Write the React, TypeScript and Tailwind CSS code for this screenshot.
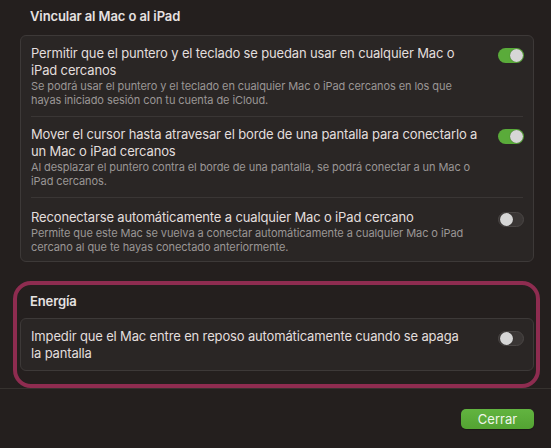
import React from 'react';

type Row = {
  title: string;
  detail?: string;
  on: boolean;
};

const linkRows: Row[] = [
  {
    title: 'Permitir que el puntero y el teclado se puedan usar en cualquier Mac o iPad cercanos',
    detail:
      'Se podrá usar el puntero y el teclado en cualquier Mac o iPad cercanos en los que hayas iniciado sesión con tu cuenta de iCloud.',
    on: true,
  },
  {
    title: 'Mover el cursor hasta atravesar el borde de una pantalla para conectarlo a un Mac o iPad cercanos',
    detail: 'Al desplazar el puntero contra el borde de una pantalla, se podrá conectar a un Mac o iPad cercanos.',
    on: true,
  },
  {
    title: 'Reconectarse automáticamente a cualquier Mac o iPad cercano',
    detail:
      'Permite que este Mac se vuelva a conectar automáticamente a cualquier Mac o iPad cercano al que te hayas conectado anteriormente.',
    on: false,
  },
];

function Toggle({ on }: { on: boolean }) {
  return (
    <div
      className={`mt-[3px] flex h-[15px] w-[26px] shrink-0 items-center rounded-full p-[1px] ${
        on ? 'justify-end bg-[#5aab3a]' : 'justify-start border border-[#4a4645] bg-[#3a3635]'
      }`}
    >
      <div className="h-[13px] w-[13px] rounded-full bg-[#d6d6d6] shadow-[0_0_1px_rgba(0,0,0,0.5)]" />
    </div>
  );
}

function SettingRow({ row, textWidth, className = '' }: { row: Row; textWidth: string; className?: string }) {
  return (
    <div className={`flex items-start justify-between pl-[10px] pr-[9px] ${className}`}>
      <div className={textWidth}>
        <p className="text-[13px] leading-[17px] tracking-[-0.15px] text-[#e2dedd]">{row.title}</p>
        {row.detail && (
          <p className="text-[11px] leading-[14px] tracking-[-0.08px] text-[#9a9695]">{row.detail}</p>
        )}
      </div>
      <Toggle on={row.on} />
    </div>
  );
}

export default function App() {
  return (
    <div
      className="relative flex h-[448px] w-[551px] flex-col overflow-hidden bg-[#241f1e]"
      style={{ fontFamily: 'Inter, "Noto Sans", sans-serif' }}
    >
      <div className="pl-[20px] pr-[17px]">
        {/* Vincular al Mac o al iPad */}
        <h2 className="pl-[10px] pt-[8px] text-[13px] font-semibold leading-[17px] tracking-[-0.1px] text-[#e6e2e1]">
          Vincular al Mac o al iPad
        </h2>
        <div className="mt-[10px] rounded-[6px] border border-[#3d3938] bg-[#2a2625]">
          <SettingRow row={linkRows[0]} textWidth="w-[450px]" className="pt-[9px] pb-[9px]" />
          <div className="mx-[10px] h-px bg-[#3a3635]" />
          <SettingRow row={linkRows[1]} textWidth="w-[450px]" className="pt-[9px] pb-[9px]" />
          <div className="mx-[10px] h-px bg-[#3a3635]" />
          <SettingRow row={linkRows[2]} textWidth="w-[450px]" className="pt-[11px] pb-[7px]" />
        </div>

        {/* Energía */}
        <h2 className="mt-[31px] pl-[10px] text-[13px] font-semibold leading-[17px] tracking-[-0.1px] text-[#e6e2e1]">
          Energía
        </h2>
        <div className="mt-[8px] rounded-[6px] border border-[#3d3938] bg-[#2a2625] pt-[9px] pb-[8px]">
          <SettingRow
            row={{ title: 'Impedir que el Mac entre en reposo automáticamente cuando se apaga la pantalla', on: false }}
            textWidth="w-[438px]"
          />
        </div>
      </div>

      {/* footer */}
      <div className="mt-[17px] h-px bg-[#36322f]" />
      <div className="flex justify-end px-[17px] pt-[20px]">
        <button className="h-[20px] w-[73px] rounded-[5px] bg-gradient-to-b from-[#62b440] to-[#53a332] text-[13px] leading-[20px] text-[#eef5ea] shadow-[0_1px_1px_rgba(0,0,0,0.3)]">
          Cerrar
        </button>
      </div>

      {/* highlight around the energy group */}
      <div className="pointer-events-none absolute left-[13px] top-[281px] h-[107px] w-[527px] rounded-[18px] border-[4px] border-[#8e2c50]" />
    </div>
  );
}
